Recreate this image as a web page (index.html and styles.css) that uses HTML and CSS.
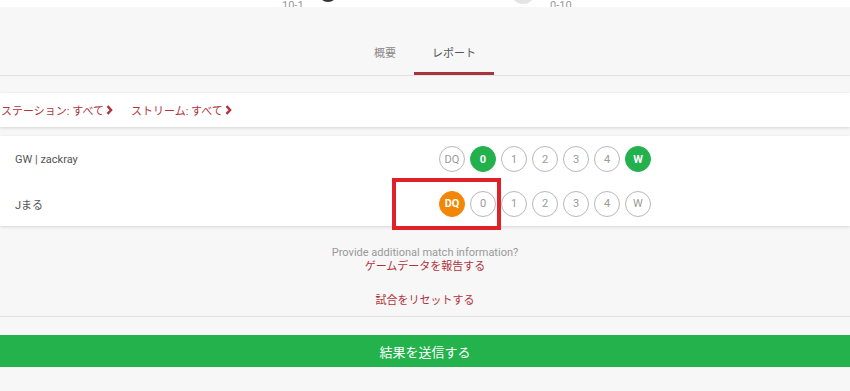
FILE: index.html
```html
<!DOCTYPE html>
<html>

<head>
    <meta name="viewport" content="width=device-width, initial-scale=1.0">
    <link rel="stylesheet" href="styles.css">
</head>

<body>
    <div class="hero-tail">
        <span class="score score-left">10-1</span>
        <span class="avatar avatar-dark"></span>
        <span class="avatar avatar-light"></span>
        <span class="score score-right">0-10</span>
    </div>

    <div class="tabs">
        <div class="tab">概要</div>
        <div class="tab active">レポート</div>
    </div>

    <div class="filterbar">
        <a class="filter">ステーション: すべて
            <svg class="chev" width="7" height="10" viewBox="0 0 7 10"><path d="M1.5 1.2l3.6 3.8-3.6 3.8" /></svg>
        </a>
        <a class="filter">ストリーム: すべて
            <svg class="chev" width="7" height="10" viewBox="0 0 7 10"><path d="M1.5 1.2l3.6 3.8-3.6 3.8" /></svg>
        </a>
    </div>

    <div class="card">
        <div class="player">
            <div class="name">GW | zackray</div>
            <div class="scores">
                <span class="pick">DQ</span>
                <span class="pick green">0</span>
                <span class="pick">1</span>
                <span class="pick">2</span>
                <span class="pick">3</span>
                <span class="pick">4</span>
                <span class="pick green">W</span>
            </div>
        </div>
        <div class="player">
            <div class="name">Jまる</div>
            <div class="scores">
                <span class="pick orange">DQ</span>
                <span class="pick">0</span>
                <span class="pick">1</span>
                <span class="pick">2</span>
                <span class="pick">3</span>
                <span class="pick">4</span>
                <span class="pick">W</span>
            </div>
        </div>
    </div>

    <div class="extra">
        <p class="hint">Provide additional match information?</p>
        <a class="link">ゲームデータを報告する</a>
        <a class="link reset">試合をリセットする</a>
    </div>

    <div class="submit-wrap">
        <button class="submit">結果を送信する</button>
    </div>

    <div class="highlight"></div>
</body>

</html>
```

FILE: styles.css
```css
* {
    box-sizing: border-box;
}

body {
    margin: 0;
    background-color: #f7f7f7;
    font-family: Roboto, "Noto Sans CJK JP", sans-serif;
    color: #555;
}

a {
    cursor: pointer;
}

.hero-tail {
    height: 7px;
    background-color: #fff;
    overflow: hidden;
    display: flex;
    align-items: flex-end;
}

.score {
    width: 30px;
    font-size: 11px;
    line-height: 12px;
    color: #999;
    margin-bottom: -5px;
}

.score-left {
    margin-left: 282px;
}

.score-right {
    margin-left: 15px;
}

.avatar {
    border-radius: 50%;
}

.avatar-dark {
    width: 20px;
    height: 20px;
    background-color: #333;
    margin-left: 6px;
    margin-bottom: 5px;
}

.avatar-light {
    width: 24px;
    height: 24px;
    background-color: #e4e4e4;
    margin-left: 173px;
    margin-bottom: 3px;
}

.tabs {
    display: flex;
    justify-content: center;
    border-bottom: 1px solid #e2e2e2;
}

.tab {
    font-size: 11px;
    line-height: 16px;
    padding: 39px 18px 10px;
    border-bottom: 3px solid transparent;
    color: #8a8a8a;
}

.tab.active {
    color: #555;
    border-bottom-color: #a8353c;
}

.filterbar {
    margin-top: 17px;
    height: 34px;
    background-color: #fff;
    box-shadow: 0 1px 3px rgba(0, 0, 0, 0.14);
    display: flex;
    align-items: center;
    gap: 18px;
    padding-left: 1px;
}

.filter {
    font-size: 11px;
    color: #b0333b;
    display: flex;
    align-items: center;
}

.chev {
    margin-left: 2px;
}

.chev path {
    fill: none;
    stroke: #b0333b;
    stroke-width: 2.4;
}

.card {
    margin-top: 9px;
    background-color: #fff;
    box-shadow: 0 1px 3px rgba(0, 0, 0, 0.14);
}

.player {
    height: 45px;
    display: flex;
    align-items: center;
    padding-left: 15px;
}

.player:first-child {
    padding-top: 1px;
}

.name {
    width: 424px;
    font-size: 11px;
    color: #555;
}

.scores {
    display: flex;
    gap: 5px;
}

.pick {
    width: 26px;
    height: 26px;
    border-radius: 50%;
    border: 1px solid #b8b8b8;
    display: flex;
    align-items: center;
    justify-content: center;
    font-size: 11px;
    color: #9a9a9a;
}

.pick.green {
    background-color: #23b14d;
    border-color: #23b14d;
    color: #fff;
    font-weight: bold;
}

.pick.orange {
    background-color: #f28706;
    border-color: #f28706;
    color: #fff;
    font-weight: bold;
}

.extra {
    text-align: center;
    padding-top: 21px;
    padding-bottom: 8px;
    border-bottom: 1px solid #e2e2e2;
}

.hint {
    margin: 0 0 2px;
    font-size: 11px;
    line-height: 11px;
    color: #999;
}

.link {
    display: block;
    font-size: 11px;
    line-height: 14px;
    color: #b0333b;
}

.link.reset {
    margin-top: 20px;
}

.submit-wrap {
    padding-top: 18px;
}

.submit {
    display: block;
    width: 100%;
    height: 32px;
    border: none;
    background-color: #23b24b;
    color: #fff;
    font-family: Roboto, "Noto Sans CJK JP", sans-serif;
    font-size: 13px;
}

.highlight {
    position: absolute;
    left: 392px;
    top: 178px;
    width: 109px;
    height: 52px;
    border: 4px solid #e2202a;
}
```
